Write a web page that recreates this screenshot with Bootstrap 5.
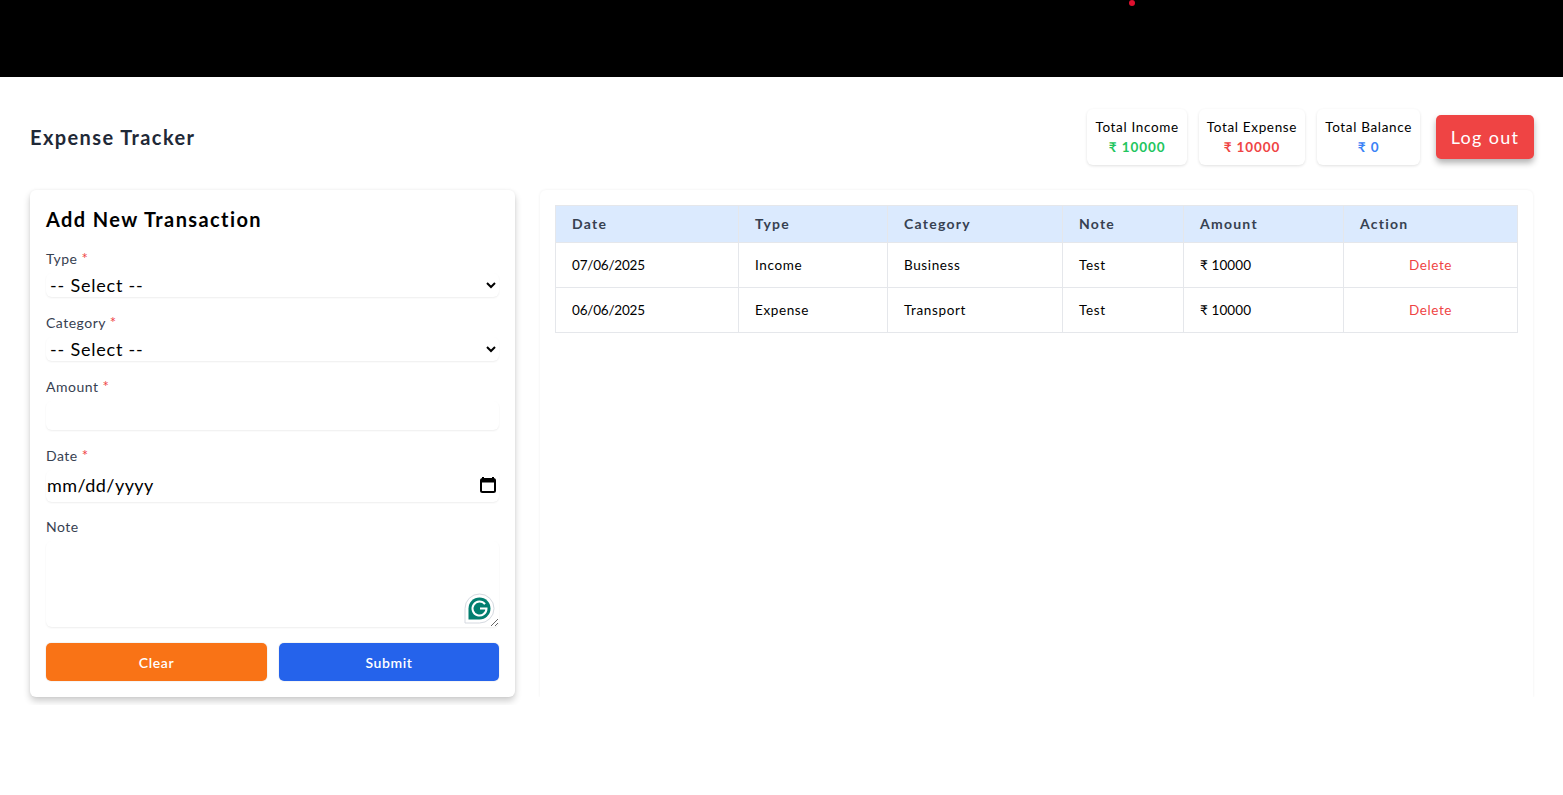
<!DOCTYPE html>
<html lang="en">
<head>
    <meta charset="UTF-8">
    <meta name="viewport" content="width=device-width, initial-scale=1.0">
    <title>Expense Tracker</title>
    <link href="https://cdn.jsdelivr.net/npm/bootstrap@5.3.0/dist/css/bootstrap.min.css" rel="stylesheet">
    <style>
        body { font-family: Lato, "Liberation Sans", sans-serif; color: #000; background: #fff; letter-spacing: .5px; }
        .top-strip { height: 77px; background: #000; position: relative; }
        .top-dot { position: absolute; left: 1129px; top: 0; width: 6px; height: 6px; border-radius: 50%; background: #e0102f; }
        .head-row { height: 113px; padding: 32px 29px 25px 30px; }
        .app-title { font-size: 20px; font-weight: 700; color: #1f2937; margin: 0; letter-spacing: 1.4px; }
        .stat-row { gap: 12px; margin-right: 8px; }
        .stat-box { height: 56px; padding: 9px 8px 0; border-radius: 6px; box-shadow: 0 1px 3px rgba(0,0,0,.12); font-size: 13.5px; line-height: 18px; text-align: center; letter-spacing: .66px; }
        .stat-val { font-weight: 700; font-size: 13.5px; line-height: 20px; margin-top: 1px; letter-spacing: .9px; }
        .val-green { color: #22c55e; }
        .val-red { color: #ef4444; }
        .val-blue { color: #3b82f6; }
        .logout-btn { width: 98px; height: 44px; background: #ef4444; color: #fff; border: 0; border-radius: 5px; font-size: 18px; letter-spacing: 1.3px; box-shadow: 0 4px 6px rgba(0,0,0,.3); }
        .main-row { padding: 0 30px 8px; gap: 25px; }
        .form-panel { width: 485px; height: 507px; padding: 16px; border-radius: 6px; background: #fff; box-shadow: 0 4px 7px rgba(0,0,0,.2), 0 0 3px rgba(0,0,0,.05); }
        .form-title { font-size: 20px; font-weight: 700; line-height: 26px; margin: 0 0 17px; letter-spacing: 1.4px; }
        .fld-label { display: block; font-size: 14px; line-height: 20px; color: #374151; margin-bottom: 4px; }
        .req { color: #ef4444; font-size: 15px; line-height: 0; }
        .fld { display: block; width: 100%; border: 0; border-radius: 6px; background: #fff; box-shadow: 0 1px 2px rgba(0,0,0,.07); font-family: inherit; font-size: 18px; color: #000; letter-spacing: .8px; outline: 0; }
        select.fld { height: 24px; line-height: 24px; padding: 0; margin-bottom: 16px; }
        input.amount-fld { height: 29px; margin-bottom: 16px; }
        .date-fld { height: 32px; margin-bottom: 15px; padding: 0 2px 2px 1px; line-height: 30px; letter-spacing: .45px; }
        .note-wrap { position: relative; margin-bottom: 16px; }
        textarea.fld { height: 86px; }
        .g-badge { position: absolute; right: 4px; bottom: 3px; width: 31px; height: 31px; }
        .form-btn { height: 38px; border: 0; border-radius: 5px; color: #fff; font-size: 14px; font-weight: 600; letter-spacing: .6px; box-shadow: 0 0 0 1px rgba(0,0,0,.04); }
        .btn-clear { background: #f97316; width: 221px; }
        .btn-send { background: #2563eb; width: 220px; }
        .list-panel { width: 993px; height: 507px; padding: 15px; border-radius: 6px 6px 0 0; box-shadow: 0 0 3px rgba(0,0,0,.07); clip-path: inset(-6px -6px 0 -6px); }
        .tx-table { width: 963px; table-layout: fixed; border-collapse: collapse; font-size: 13.5px; letter-spacing: .62px; }
        .tx-table th, .tx-table td { border: 1px solid #e5e7eb; padding: 0 16px; }
        .tx-table th { height: 37px; padding-bottom: 2px; background: #dbeafe; color: #374151; font-size: 14px; font-weight: 700; letter-spacing: 1.25px; }
        .tx-table td { height: 45px; }
        .date-txt { letter-spacing: -.2px; }
        .amt-txt { letter-spacing: .1px; }
        .del-link { color: #ef4444; }
    </style>
</head>
<body>
    <div class="top-strip"><span class="top-dot"></span></div>

    <div class="head-row d-flex justify-content-between align-items-center">
        <h1 class="app-title">Expense Tracker</h1>
        <div class="d-flex align-items-center">
            <div class="stat-row d-flex">
                <div class="stat-box">Total Income<div class="stat-val val-green">₹ 10000</div></div>
                <div class="stat-box">Total Expense<div class="stat-val val-red">₹ 10000</div></div>
                <div class="stat-box">Total Balance<div class="stat-val val-blue">₹ 0</div></div>
            </div>
            <button class="logout-btn ms-2">Log out</button>
        </div>
    </div>

    <div class="main-row d-flex">
        <form class="form-panel">
            <h2 class="form-title">Add New Transaction</h2>
            <label class="fld-label">Type <span class="req">*</span></label>
            <select class="fld"><option>-- Select --</option></select>
            <label class="fld-label">Category <span class="req">*</span></label>
            <select class="fld"><option>-- Select --</option></select>
            <label class="fld-label">Amount <span class="req">*</span></label>
            <input class="fld amount-fld" type="text">
            <label class="fld-label">Date <span class="req">*</span></label>
            <div class="fld date-fld d-flex justify-content-between align-items-center">
                <span>mm/dd/yyyy</span>
                <svg width="18" height="18" viewBox="0 0 18 18"><path d="M4 1v2M14 1v2" stroke="#000" stroke-width="2"/><rect x="2" y="3" width="14" height="13" rx="1.5" fill="none" stroke="#000" stroke-width="2"/><rect x="2" y="3" width="14" height="3.5" fill="#000"/></svg>
            </div>
            <label class="fld-label">Note</label>
            <div class="note-wrap">
                <textarea class="fld"></textarea>
                <svg class="g-badge" viewBox="0 0 31 31">
                    <path d="M1 30V15.5A14.5 14.5 0 1 1 15.5 30Z" fill="#fff" stroke="#d5d9e0"/>
                    <path d="M4.5 26.500V15.500A11 11 0 1 1 15.500 26.500Z" fill="#027e6f"/>
                    <path d="M21 11.200A7 7 0 1 0 22.500 15.500H16" fill="none" stroke="#fff" stroke-width="2"/>
                </svg>
            </div>
            <div class="d-flex justify-content-between">
                <button type="button" class="form-btn btn-clear">Clear</button>
                <button type="button" class="form-btn btn-send">Submit</button>
            </div>
        </form>

        <div class="list-panel">
            <table class="tx-table">
                <colgroup>
                    <col width="183"><col width="149"><col width="175"><col width="121"><col width="160"><col width="174">
                </colgroup>
                <thead>
                    <tr><th>Date</th><th>Type</th><th>Category</th><th>Note</th><th>Amount</th><th>Action</th></tr>
                </thead>
                <tbody>
                    <tr><td><span class="date-txt">07/06/2025</span></td><td>Income</td><td>Business</td><td>Test</td><td><span class="amt-txt">₹ 10000</span></td><td class="text-center"><span class="del-link">Delete</span></td></tr>
                    <tr><td><span class="date-txt">06/06/2025</span></td><td>Expense</td><td>Transport</td><td>Test</td><td><span class="amt-txt">₹ 10000</span></td><td class="text-center"><span class="del-link">Delete</span></td></tr>
                </tbody>
            </table>
        </div>
    </div>
    <script src="https://cdn.jsdelivr.net/npm/bootstrap@5.3.0/dist/js/bootstrap.bundle.min.js"></script>
</body>
</html>
